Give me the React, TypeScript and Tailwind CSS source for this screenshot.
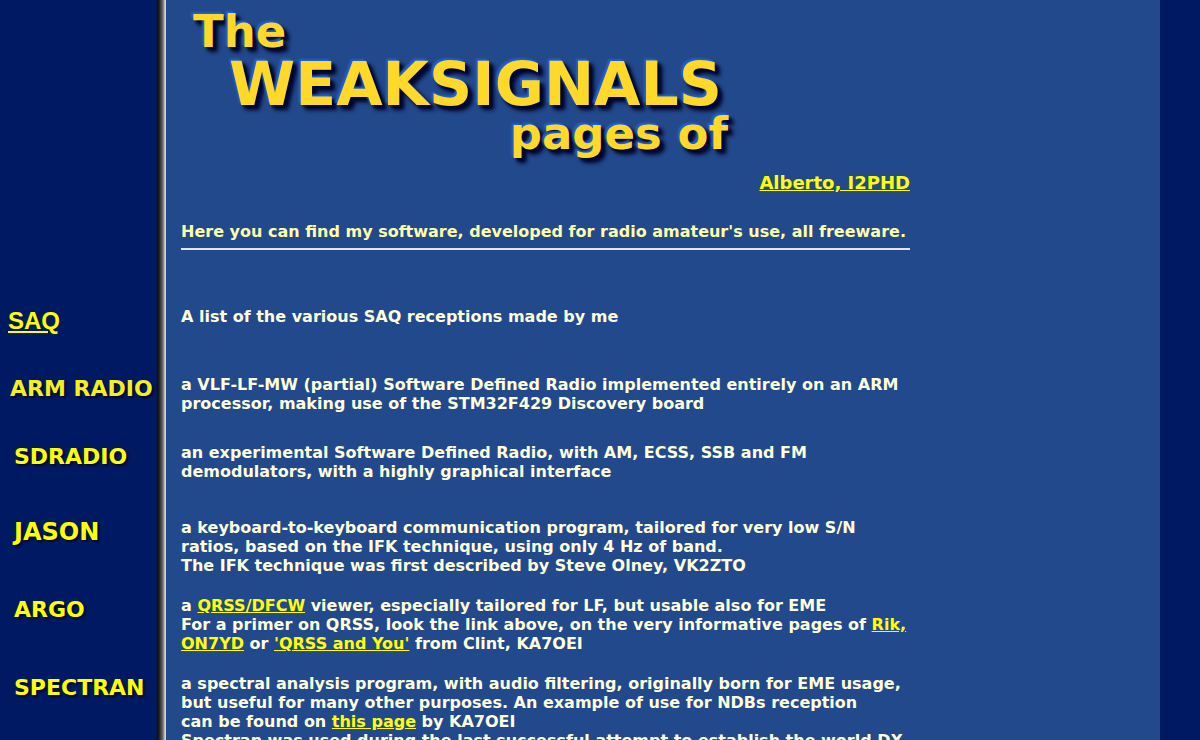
import React from 'react';

interface Program {
  name: string;
  href: string;
  labelClass: string;
  rowClass: string;
  description: React.ReactNode;
}

const linkClass = 'text-[#ffff00] underline';

const programs: Program[] = [
  {
    name: 'SAQ',
    href: '#saq',
    labelClass: "pl-2 font-['Liberation_Sans',sans-serif] text-2xl leading-7 underline",
    rowClass: 'pb-10',
    description: 'A list of the various SAQ receptions made by me',
  },
  {
    name: 'ARM RADIO',
    href: '#armradio',
    labelClass: 'pl-2.5 text-[22px] leading-7 text-[#f4f020] text-shadow-[2px_2px_2px_#000a30]',
    rowClass: 'pb-[30px]',
    description: (
      <>
        a VLF-LF-MW (partial) Software Defined Radio implemented entirely on an ARM
        <br />
        processor, making use of the STM32F429 Discovery board
      </>
    ),
  },
  {
    name: 'SDRADIO',
    href: '#sdradio',
    labelClass: 'pl-3.5 text-[22px] leading-7 text-[#ffff00] text-shadow-[2px_2px_2px_#000a30]',
    rowClass: 'pb-[37px]',
    description: (
      <>
        an experimental Software Defined Radio, with AM, ECSS, SSB and FM
        <br />
        demodulators, with a highly graphical interface
      </>
    ),
  },
  {
    name: 'JASON',
    href: '#jason',
    labelClass: 'pl-3.5 text-2xl leading-7 text-[#ffff00] text-shadow-[2px_2px_2px_#000a30]',
    rowClass: 'pb-[21px]',
    description: (
      <>
        a keyboard-to-keyboard communication program, tailored for very low S/N
        <br />
        ratios, based on the IFK technique, using only 4 Hz of band.
        <br />
        The IFK technique was first described by Steve Olney, VK2ZTO
      </>
    ),
  },
  {
    name: 'ARGO',
    href: '#argo',
    labelClass: 'pl-3.5 text-[22px] leading-7 text-[#ffff00] text-shadow-[2px_2px_2px_#000a30]',
    rowClass: 'pb-[21px]',
    description: (
      <>
        a <a href="#qrss" className={linkClass}>QRSS/DFCW</a> viewer, especially tailored for LF, but usable also for EME
        <br />
        For a primer on QRSS, look the link above, on the very informative pages of{' '}
        <a href="#on7yd" className={linkClass}>
          Rik,
          <br />
          ON7YD
        </a>{' '}
        or <a href="#qrss-and-you" className={linkClass}>'QRSS and You'</a> from Clint, KA7OEI
      </>
    ),
  },
  {
    name: 'SPECTRAN',
    href: '#spectran',
    labelClass: 'pl-3.5 text-[22px] leading-7 text-[#ffff00] text-shadow-[2px_2px_2px_#000a30]',
    rowClass: '',
    description: (
      <>
        a spectral analysis program, with audio filtering, originally born for EME usage,
        <br />
        but useful for many other purposes. An example of use for NDBs reception
        <br />
        can be found on <a href="#ndb" className={linkClass}>this page</a> by KA7OEI
        <br />
        Spectran was used during the last successful attempt to establish the world DX
      </>
    ),
  },
];

const Logo: React.FC = () => (
  <h1 className="flex flex-col pt-2 font-extrabold text-[#ffd929] text-shadow-[-2px_-2px_2px_#2060d8,3px_3px_3px_#00062e,5px_5px_4px_#00062e]">
    <span className="pl-3 text-[45px] leading-12">The</span>
    <span className="pl-12 text-[60px] leading-14">WEAKSIGNALS</span>
    <span className="self-end pr-[182px] text-[45px] leading-11">pages of</span>
  </h1>
);

const ProgramRow: React.FC<{ program: Program }> = ({ program }) => (
  <li className={`flex items-start ${program.rowClass}`}>
    <div className="w-[181px] shrink-0 text-[#ffff00]">
      <a href={program.href} className={`block whitespace-nowrap ${program.labelClass}`}>
        {program.name}
      </a>
    </div>
    <p className="min-w-0 flex-1 text-[#ffffdd]">{program.description}</p>
  </li>
);

export default function App() {
  return (
    <div className="min-h-screen bg-[#001963] bg-[linear-gradient(to_right,#001963_156px,#101010_158px,#303030_160px,#707070_163px,#d8d4cc_165px,#d8d4cc_166px,#22498b_166px,#22498b_1160px,#001963_1160px)] font-['DejaVu_Sans',sans-serif] text-base leading-[19px] font-bold">
      <div className="max-w-[910px]">
        <header className="pl-[181px]">
          <Logo />
          <p className="pt-4 text-right text-lg leading-[22px]">
            <a href="#alberto" className={linkClass}>Alberto, I2PHD</a>
          </p>
          <p className="pt-7 text-[#ffffaa]">
            Here you can find my software, developed for radio amateur's use, all freeware.
          </p>
          <hr className="mt-[7px] border-t-2 border-[#e4e4e4]" />
        </header>
        <main className="pt-[57px]">
          <ul>
            {programs.map((program) => (
              <ProgramRow key={program.name} program={program} />
            ))}
          </ul>
        </main>
      </div>
    </div>
  );
}
